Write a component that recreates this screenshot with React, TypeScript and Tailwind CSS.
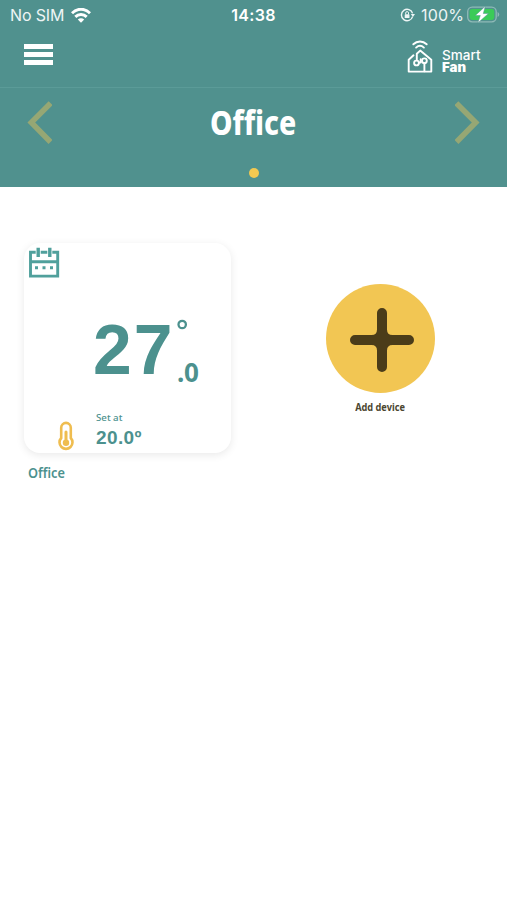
import React from 'react';

function StatusBar() {
  return (
    <div className="flex h-[30px] items-center px-[10px] font-[Inter,sans-serif] text-[16px] leading-none text-[#edf5f5]">
      <div className="flex flex-1 items-center">
        <span className="w-[61px] whitespace-nowrap tracking-[-0.15px]">No SIM</span>
        <svg className="h-[15px] w-[20px]" viewBox="0 0 20 15" fill="none" stroke="#fff" strokeWidth="2.9">
          <path d="M1 5.2C6-.1 14-.1 19 5.2" />
          <path d="M4.3 8.9c3.2-3.2 8.2-3.2 11.4 0" />
          <path d="M6.8 11.4c1.8-1.6 4.6-1.6 6.4 0L10 14.8Z" fill="#fff" stroke="none" />
        </svg>
      </div>
      <span className="font-semibold tracking-[0.3px] text-white">14:38</span>
      <div className="flex flex-1 items-center justify-end">
        <svg className="mr-[6px] h-[14px] w-[15px]" viewBox="0 0 15 14" fill="none" stroke="#edf5f5" strokeWidth="1.4">
          <path d="M12.6 8.6A5.7 5.7 0 1 1 12.6 5.4" />
          <path d="M10.8 6h4.2l-2.1 3Z" fill="#edf5f5" stroke="none" />
          <rect x="4.7" y="6.3" width="4.8" height="3.8" rx=".6" fill="#edf5f5" stroke="none" />
          <path d="M5.7 6.4V5a1.4 1.4 0 0 1 2.8 0v1.4" strokeWidth="1" />
        </svg>
        <span className="mr-[2px] tracking-[0.15px]">100%</span>
        <svg className="-mr-[3px] h-[18px] w-[34px]" viewBox="0 0 34 18">
          <rect x="1.7" y="1.2" width="28.5" height="14.6" rx="4.5" fill="none" stroke="#8fb9b7" strokeWidth="1.3" />
          <rect x="3.6" y="3.1" width="24.7" height="10.8" rx="2.8" fill="#3bcb58" />
          <path d="M31.6 6v5q1.7-.7 1.7-2.5t-1.7-2.5" fill="#8fb9b7" />
          <path d="M19.3.2 9.3 9.5h5L11.8 17 22.5 7.5h-5.2Z" fill="#fff" stroke="#509491" strokeWidth=".5" />
        </svg>
      </div>
    </div>
  );
}

function Logo() {
  return (
    <div className="flex items-start">
      <svg className="h-[34px] w-[26px]" viewBox="0 0 26 34" fill="none" stroke="#fff" strokeWidth="1.9" strokeLinecap="round" strokeLinejoin="round">
        <path d="M6.3 4.3c3.9-3.7 9.5-3.7 13.4 0" />
        <path d="M9.1 7.6c2.3-2.1 5.5-2.1 7.8 0" />
        <path d="M6.5 15.3 1.7 19.8v11.8h22.6V19.8L13.2 10.6l-3.4 3.2v6" />
        <circle cx="9.5" cy="23" r="2.4" />
        <circle cx="17.4" cy="20.8" r="2.4" />
        <path d="M17.4 23.2v8M12.5 22.5h1.2v-3.2" />
      </svg>
      <div className="mt-[9px] ml-[9px] flex w-[41px] flex-col font-[Inter,sans-serif] text-[13px] leading-[12px] text-white">
        <div className="origin-left scale-x-[1.04] font-medium">Smart</div>
        <div className="origin-left scale-x-[1.02] font-black">Fan</div>
      </div>
    </div>
  );
}

function Chevron({ flip = false }: { flip?: boolean }) {
  return (
    <svg className={flip ? 'h-[44px] w-[26px] -scale-x-100' : 'h-[44px] w-[26px]'} viewBox="0 0 26 44" fill="none" stroke="#96a774" strokeWidth="5.5">
      <path d="M24.6 2.2 5.3 21.5l19.2 19.5" />
    </svg>
  );
}

function DeviceCard() {
  return (
    <div className="w-[207px] font-['Noto_Sans',sans-serif] text-[#4c918e]">
      <div className="flex h-[210px] flex-col rounded-[16px] bg-white pt-[4px] shadow-[0_2px_9px_rgba(0,0,0,0.09)]">
        <svg className="ml-[5px] h-[31px] w-[31px] shrink-0" viewBox="0 0 31 31" fill="none" stroke="#50a09c" strokeWidth="2.9">
          <path d="M1.5 5.3h27.2v23.8H1.5ZM2 14.7h27" />
          <path d="M9.2.5v9.2M20.8.5v9.2" stroke="#fff" strokeWidth="5" />
          <path d="M9.2.7v9.2M20.8.7v9.2" strokeWidth="3.4" />
          <path d="M6 20.8h3M13.5 20.8h3M21 20.8h3" strokeWidth="3" />
        </svg>
        <div className="mt-[41px] flex h-[64px] pl-[69px]">
          <span className="w-[84px] origin-left scale-x-[.98] font-['Liberation_Sans',sans-serif] text-[71px] leading-[62px] font-bold tracking-[2px]">27</span>
          <div className="flex flex-col">
            <svg className="h-[11px] w-[11px] shrink-0" viewBox="0 0 11 11" fill="none" stroke="#4c918e" strokeWidth="2.3">
              <circle cx="5.2" cy="5.5" r="3.7" />
            </svg>
            <span className="mt-[29px] font-['Noto_Sans',sans-serif] text-[26px] leading-[26px] font-bold tracking-[-0.2px]">.0</span>
          </div>
        </div>
        <div className="mt-[28px] flex">
          <svg className="mt-[10px] ml-[33px] h-[30px] w-[18px]" viewBox="0 0 18 30" fill="none" stroke="#efbd50" strokeWidth="2.6">
            <path d="M4.2 17V6.7a4.8 4.8 0 0 1 9.6 0V17a6.5 6.5 0 1 1-9.6 0Z" />
            <path d="M9 11v11" strokeWidth="3" strokeLinecap="round" />
            <circle cx="9" cy="21.8" r="3.2" fill="#efbd50" stroke="none" />
          </svg>
          <div className="ml-[21px]">
            <div className="w-max text-[9.7px] leading-[13px] font-medium">Set at</div>
            <div className="mt-[2px] font-['Liberation_Sans',sans-serif] text-[19px] leading-[24px] font-bold tracking-[0.4px]">20.0º</div>
          </div>
        </div>
      </div>
      <div className="mt-[9px] ml-[4px] w-max origin-left scale-x-[.88] text-[14.5px] leading-[20px] font-semibold">Office</div>
    </div>
  );
}

function AddDevice() {
  return (
    <div className="mt-[41px] flex w-[109px] flex-col items-center">
      <div className="flex size-[109px] items-center justify-center rounded-full bg-[#f2c653]">
        <svg className="mt-[2px] ml-[2px] size-[64px]" viewBox="0 0 64 64" fill="#4b3c19">
          <path d="M27 5a5 5 0 0 1 10 0v16.5q0 5.5 5.5 5.5h16.5a5 5 0 0 1 0 10H42.5q-5.5 0-5.5 5.5v16.5a5 5 0 0 1-10 0V42.5q0-5.5-5.5-5.5H5a5 5 0 0 1 0-10h16.5q5.5 0 5.5-5.5Z" />
        </svg>
      </div>
      <div className="mt-[6px] scale-x-[.92] font-['Noto_Sans',sans-serif] text-[10px] leading-[16px] font-bold whitespace-nowrap text-[#4b4630]">Add device</div>
    </div>
  );
}

export default function App() {
  return (
    <div className="min-h-[900px] w-full bg-white">
      <header className="h-[187px] bg-[#50918e]">
        <StatusBar />
        <div className="flex h-[58px] items-start justify-between border-b border-[#5b9b98] px-[24px]">
          <button aria-label="Menu" className="mt-[14px] flex w-[29px] flex-col gap-[3px]">
            <span className="h-[5px] w-full bg-white" />
            <span className="h-[5px] w-full bg-white" />
            <span className="h-[5px] w-full bg-white" />
          </button>
          <div className="mt-[10px]"><Logo /></div>
        </div>
        <div className="flex h-[70px] items-center justify-between px-[26px]">
          <Chevron />
          <h1 className="-mt-[2px] scale-x-[.86] font-['Noto_Sans',sans-serif] text-[33px] leading-none font-extrabold text-white">Office</h1>
          <Chevron flip />
        </div>
        <div className="mx-auto mt-[10px] size-[10px] rounded-full bg-[#f3c951]" />
      </header>
      <main className="flex justify-between pt-[56px] pr-[72px] pl-[24px]">
        <DeviceCard />
        <AddDevice />
      </main>
    </div>
  );
}
